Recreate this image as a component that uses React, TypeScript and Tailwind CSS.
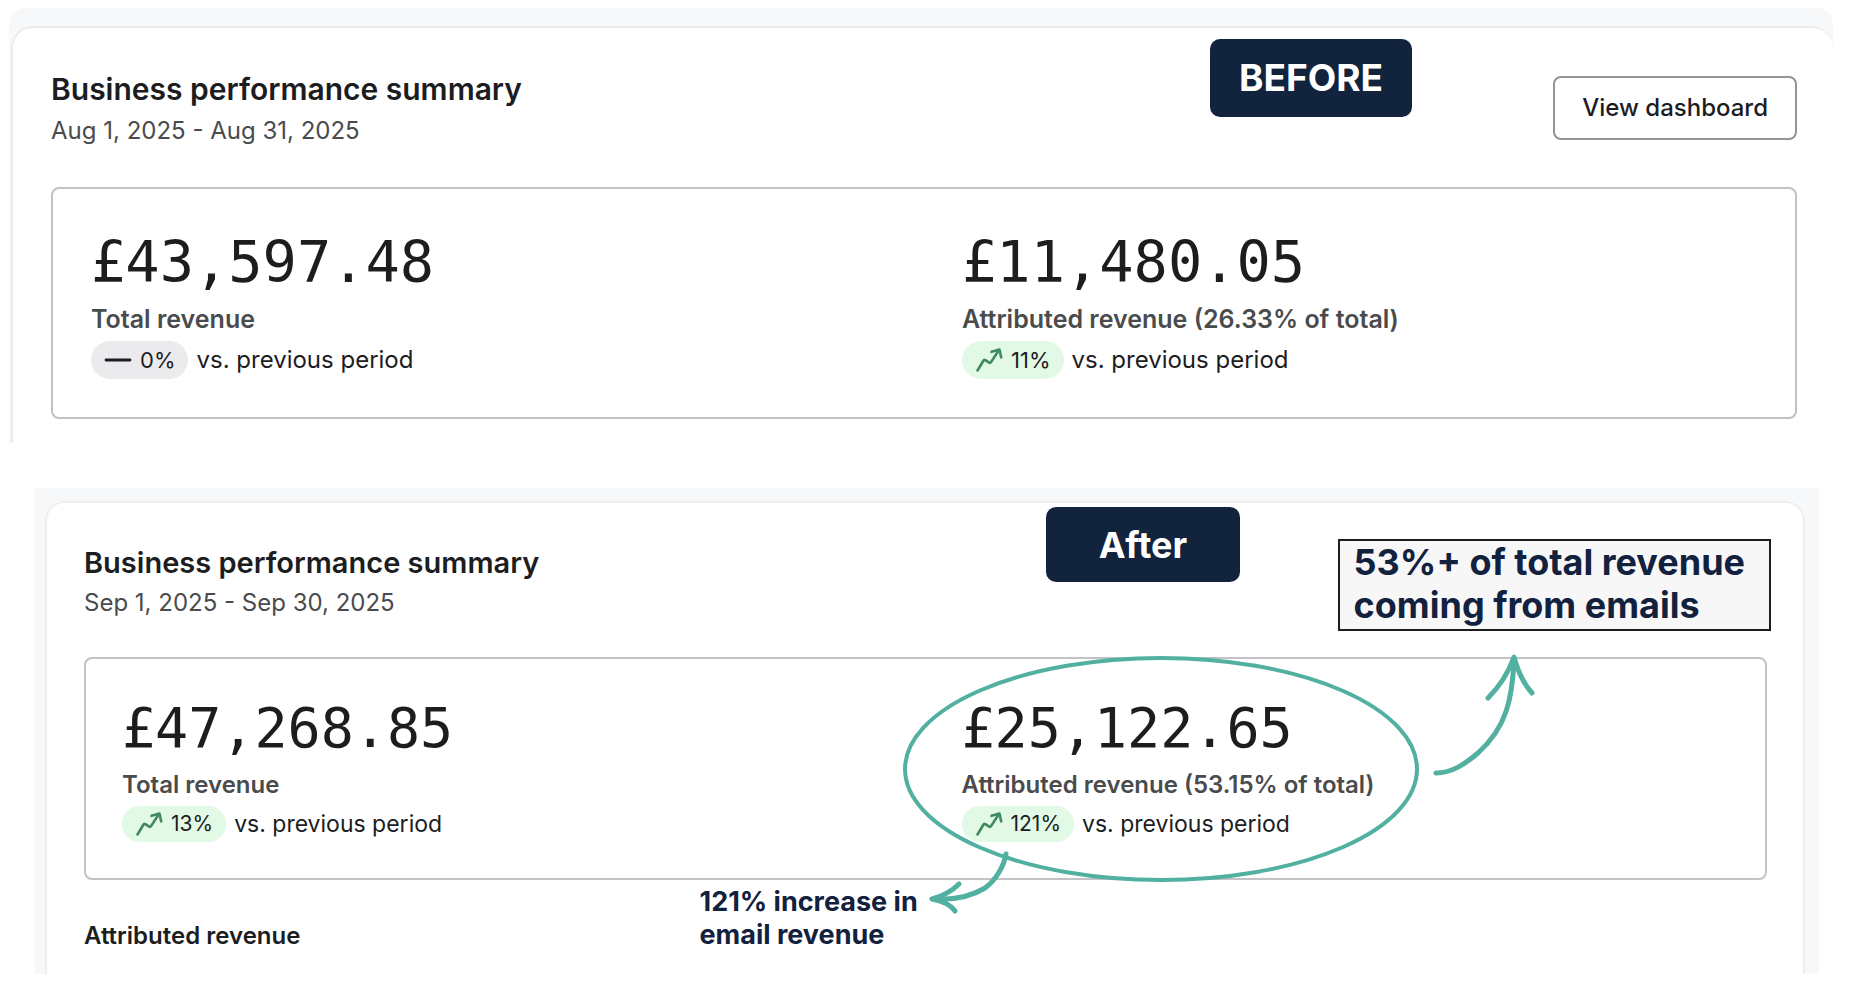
import React from "react";

type Trend = "up" | "flat";

interface StatProps {
    amount: string;
    label: string;
    change: string;
    trend: Trend;
    compact?: boolean;
    children?: React.ReactNode;
}

const TrendUpIcon: React.FC = () => (
    <svg viewBox="0 0 28 26" className="w-7 h-[26px] text-[#3f8a5f]" fill="none" stroke="currentColor" strokeWidth="2.6" strokeLinecap="round" strokeLinejoin="round" aria-hidden="true">
        <path d="M2.5 23.5 L8.5 13.5 Q9.2 12.5 10.3 13.2 L14.2 15.6 Q15.3 16.2 16 15.1 L24 3" />
        <path d="M16.5 4.8 L24.5 2.5 L26.2 10.5" />
    </svg>
);

const FlatIcon: React.FC = () => (
    <svg viewBox="0 0 28 26" className="w-7 h-[26px] text-[#1c1d1f]" fill="none" stroke="currentColor" strokeWidth="2.8" strokeLinecap="round" aria-hidden="true">
        <path d="M2 13 H26" />
    </svg>
);

const Stat: React.FC<StatProps> = ({ amount, label, change, trend, compact, children }: StatProps) => {
    return (
        <div className={compact ? "relative px-9 pt-[38px] pb-9" : "relative px-[38px] pt-[38px] pb-[38px]"}>
            <p className={compact
                ? "font-['DejaVu_Sans_Mono',monospace] text-[55px] leading-[62px] text-[#1c1d1f]"
                : "font-['DejaVu_Sans_Mono',monospace] text-[57px] leading-[70px] text-[#1c1d1f]"}
            >
                {amount}
            </p>
            <p className={compact
                ? "mt-[9px] text-[24px] leading-[34px] font-semibold text-[#4a4b4d]"
                : "mt-1 text-[25px] leading-9 font-semibold text-[#4a4b4d]"}
            >
                {label}
            </p>
            <div className="mt-1 flex items-center gap-2">
                <span className={`flex items-center gap-2 rounded-full px-[13px] text-[#1c1d1f] ${compact ? "h-9 text-[21px]" : "h-[38px] text-[22px]"} ${trend === "up" ? "bg-[#e1f9e5]" : "bg-[#ebebed]"}`}>
                    {trend === "up" ? <TrendUpIcon /> : <FlatIcon />}
                    {change}
                </span>
                <span className={compact ? "text-[23px] leading-8 text-[#1c1d1f]" : "text-[24px] leading-8 text-[#1c1d1f]"}>
                    vs. previous period
                </span>
            </div>
            {children}
        </div>
    );
}

// Circle round the attributed revenue, with the two arrows that leave it
const Highlight: React.FC = () => (
    <svg viewBox="0 0 680 300" className="absolute -left-[26px] -top-4 w-[680px] h-[300px] pointer-events-none text-[#52b0a1]" fill="none" stroke="currentColor" strokeLinecap="round" strokeLinejoin="round" aria-hidden="true">
        <ellipse cx="261" cy="126" rx="256" ry="111" strokeWidth="4" />
        <path d="M536 130 C552 130 565 121 578 110 C607 84 612 55 614 19" strokeWidth="5" />
        <path d="M588 55 C600 43 608 31 614 14 C618 29 623 40 632 50" strokeWidth="5" />
        <path d="M106 211 C104 223 96 237 85 245 C72 253 54 257 35 256" strokeWidth="5" />
        <path d="M59 241 C51 249 43 253 32 256 C43 258 50 261 55 268" strokeWidth="5" />
    </svg>
);

const App: React.FC = () => {
    return (
        <main className="min-h-screen bg-white pt-2 font-[Inter,sans-serif] text-[#1c1d1f]">
            <section className="ml-[9px] mr-[43px] overflow-hidden rounded-t-2xl bg-[#f7f8fa] pt-[18px]">
                <div className="relative ml-0.5 rounded-t-[22px] border-t-2 border-l-2 border-[#eaecee] bg-white pl-[38px] pr-9 pb-6">
                    <span className="absolute top-[11px] right-[421px] flex h-[78px] w-[202px] items-center justify-center rounded-[10px] bg-[#12243d] text-[37px] font-bold text-white">
                        BEFORE
                    </span>
                    <header className="flex items-start justify-between pt-[41px]">
                        <div>
                            <h2 className="text-[30px] leading-10 font-semibold">Business performance summary</h2>
                            <p className="mt-1 text-[24px] leading-9 text-[#4a4b4d]">Aug 1, 2025 - Aug 31, 2025</p>
                        </div>
                        <button type="button" className="mt-[7px] h-16 rounded-lg border-2 border-[#949596] px-[27px] text-[24px] font-medium">
                            View dashboard
                        </button>
                    </header>
                    <div className="mt-[38px] grid grid-cols-2 rounded-lg border-2 border-[#c2c2c4]">
                        <Stat amount="£43,597.48" label="Total revenue" change="0%" trend="flat" />
                        <Stat amount="£11,480.05" label="Attributed revenue (26.33% of total)" change="11%" trend="up" />
                    </div>
                </div>
            </section>

            <section className="mt-[45px] ml-[35px] mr-[57px] bg-[#f7f8fa] pl-2.5 pr-3.5 pt-[13px]">
                <div className="relative rounded-t-[20px] border-2 border-b-0 border-[#edeff1] bg-white pl-[37px] pr-9 pb-5">
                    <span className="absolute top-1 right-[563px] flex h-[75px] w-[194px] items-center justify-center rounded-[10px] bg-[#12243d] text-[36px] font-bold text-white">
                        After
                    </span>
                    <header className="flex items-start justify-between">
                        <div className="pt-10">
                            <h2 className="text-[29px] leading-10 font-semibold">Business performance summary</h2>
                            <p className="mt-0.5 text-[24px] leading-9 text-[#4a4b4d]">Sep 1, 2025 - Sep 30, 2025</p>
                        </div>
                        <p className="-mr-1 mt-9 border-2 border-[#1c1d1f] bg-[#f7f7f8] pl-3.5 pr-6 pb-0.5 text-[36px] leading-[43px] font-bold text-[#12213d]">
                            53%+ of total revenue<br />coming from emails
                        </p>
                    </header>
                    <div className="mt-[26px] grid grid-cols-2 rounded-lg border-2 border-[#c2c2c8]">
                        <Stat amount="£47,268.85" label="Total revenue" change="13%" trend="up" compact />
                        <Stat amount="£25,122.65" label="Attributed revenue (53.15% of total)" change="121%" trend="up" compact>
                            <Highlight />
                            <p className="absolute top-full -left-[226px] mt-[7px] text-[27px] leading-[33px] font-bold whitespace-nowrap text-[#12213d]">
                                121% increase in<br />email revenue
                            </p>
                        </Stat>
                    </div>
                    <h3 className="mt-[38px] text-[24px] leading-9 font-semibold">Attributed revenue</h3>
                </div>
            </section>
        </main>
    );
}

export default App;
